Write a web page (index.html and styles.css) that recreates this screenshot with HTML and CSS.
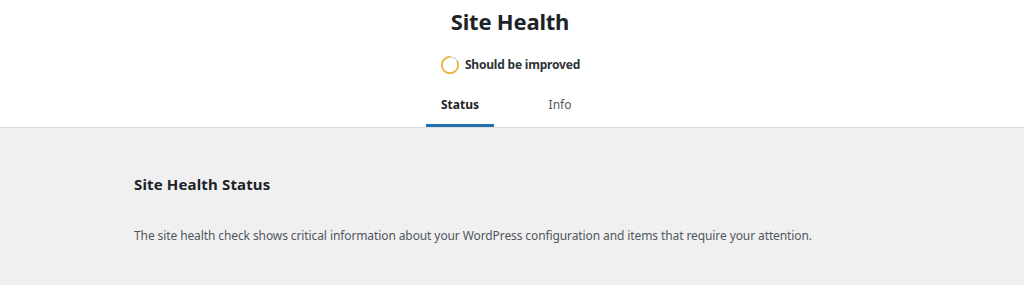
FILE: index.html
```html
<!DOCTYPE html>
<html>
<head>
	<title>Site Health</title>
	<meta charset="utf-8">
	<meta name="viewport" content="width=device-width, initial-scale=1">

	<link rel="stylesheet" href="styles.css">
</head>

<body>

	<div id="health-header">

		<h1>Site Health</h1>

		<div id="health-progress">
			<svg class="progress-ring" width="20" height="20" viewBox="0 0 20 20">
				<circle cx="10" cy="10" r="8.2" fill="none" stroke="#dcdcde" stroke-width="1.7"></circle>
				<circle cx="10" cy="10" r="8.2" fill="none" stroke="#f0b429" stroke-width="1.7" stroke-dasharray="43 51.6" transform="rotate(-30 10 10)"></circle>
			</svg>
			<span class="progress-label">Should be improved</span>
		</div>

		<nav id="health-tabs">
			<a class="tab active" href="#">Status</a>
			<a class="tab" href="#">Info</a>
		</nav>

	</div>



	<div id="health-body">
		<h2>Site Health Status</h2>
		<p>The site health check shows critical information about your WordPress configuration and items that require your attention.</p>
	</div>

</body>
</html>
```

FILE: styles.css
```css
* {
	margin: 0;
	padding: 0;
	box-sizing: border-box;
}

body {
	background-color: #f0f0f1;
	color: #1d2327;
	font-family: "Noto Sans", "Open Sans", sans-serif;
	font-size: 12px;
}



	#health-header {
		padding: 6px 4px 0 0;
		background-color: #fff;
		border-bottom: 1px solid #dcdcde;
		text-align: center;
	}

		#health-header h1 {
			font-size: 22px;
			font-weight: 700;
			line-height: 30px;
			letter-spacing: -0.2px;
		}

		#health-progress {
			display: flex;
			justify-content: center;
			align-items: center;
			gap: 5px;
			height: 20px;
			margin-top: 19px;
		}

			.progress-label {
				font-size: 12px;
				font-weight: 700;
				line-height: 20px;
				letter-spacing: -0.2px;
				color: #2c3338;
			}

		#health-tabs {
			display: inline-grid;
			grid-template-columns: 1fr 1fr;
			margin-top: 11px;
		}

			.tab {
				display: block;
				margin: 0 16px;
				padding: 9px 15px 12px;
				font-size: 12px;
				line-height: 20px;
				color: #50575e;
				text-decoration: none;
			}

			.tab.active {
				color: #1d2327;
				font-weight: 700;
				box-shadow: inset 0 -3px #2271b1;
			}



	#health-body {
		max-width: 800px;
		margin: 0 auto;
		padding: 44px 24px 0 24px;
		position: relative;
		left: -2px;
	}

		#health-body h2 {
			font-size: 15px;
			font-weight: 700;
			line-height: 24px;
			letter-spacing: 0.15px;
		}

		#health-body p {
			margin-top: 30px;
			line-height: 20px;
			letter-spacing: -0.1px;
			color: #50575e;
		}
```
